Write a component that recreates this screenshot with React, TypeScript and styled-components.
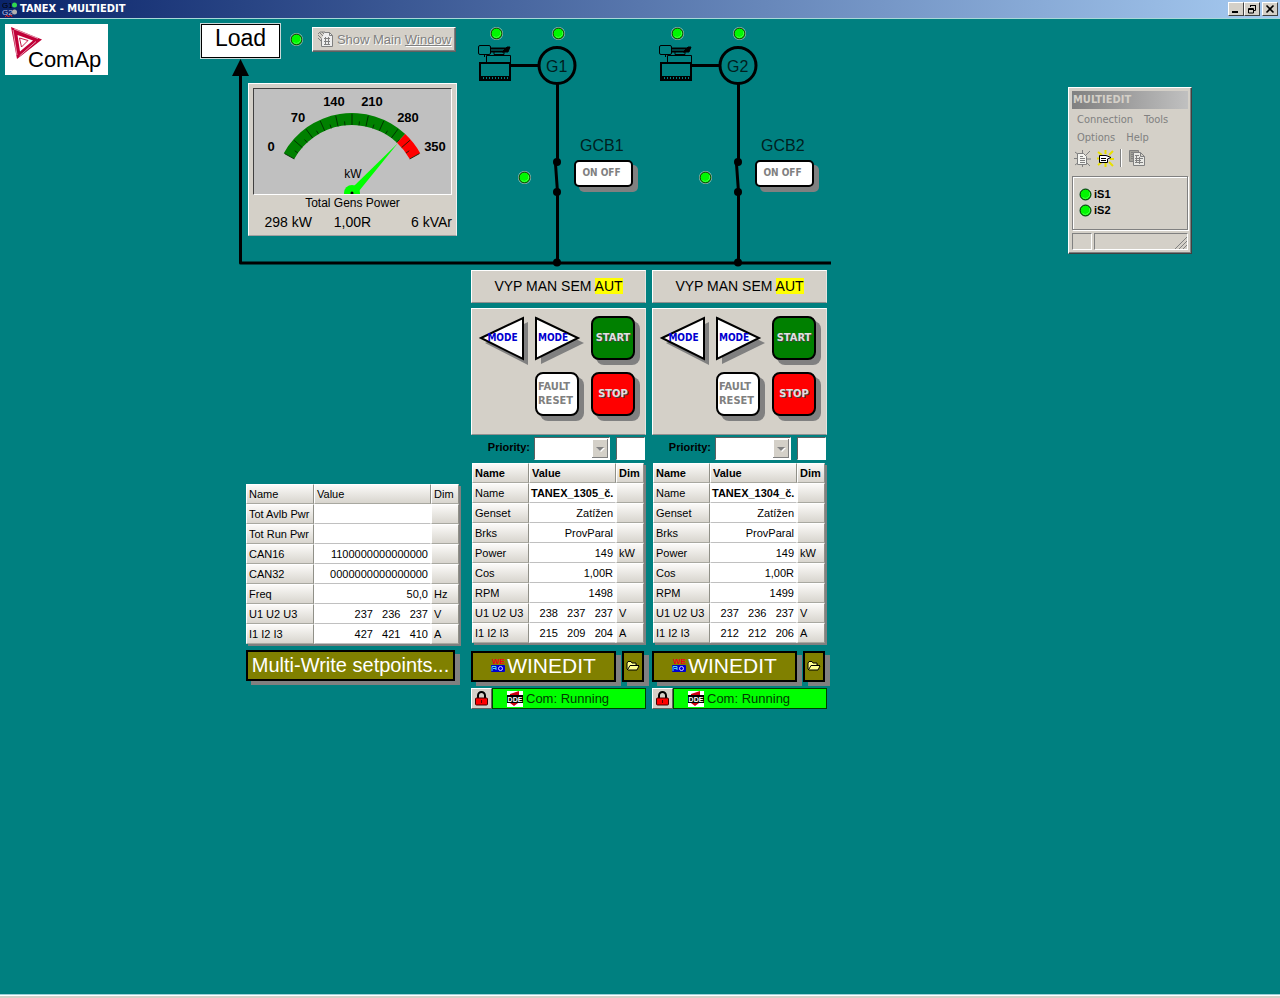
import React from "react";
import styled, { createGlobalStyle } from "styled-components";

const sans = `"Liberation Sans", Arial, sans-serif`;
const ui = `"DejaVu Sans Condensed", "DejaVu Sans", sans-serif`;

const Global = createGlobalStyle`
  * { box-sizing: border-box; }
  body { margin: 0; background: #008080; font-family: ${sans}; font-size: 11px; color: #000; }
  button, input, select { font: inherit; color: inherit; margin: 0; padding: 0; border-radius: 0; }
  svg { display: block; flex: none; }
`;

const Page = styled.div`
  min-height: 100vh;
  display: flex;
  flex-direction: column;
`;

const TitleBar = styled.header`
  height: 19px;
  display: flex;
  align-items: center;
  gap: 2px;
  padding: 0 2px;
  background: linear-gradient(90deg, #0a246a, #a6caf0);
  border-bottom: 1px solid #a8d8d8;
`;

const TitleText = styled.h1`
  margin: 0;
  flex: 1;
  font: bold 11px/16px ${ui};
  color: #fff;
`;

const WindowButtons = styled.div`
  display: flex;
`;

const WindowButton = styled.button<{ $apart?: boolean }>`
  width: 16px;
  height: 14px;
  margin-left: ${(p) => (p.$apart ? 2 : 0)}px;
  display: grid;
  place-items: center;
  background: #d4d0c8;
  border: 1px solid;
  border-color: #fff #404040 #404040 #fff;
`;

const Desktop = styled.main`
  position: relative;
  flex: 1;
  display: flex;
  align-items: flex-start;
  gap: 92px;
  padding-left: 5px;
`;

const Logo = styled.div`
  width: 103px;
  height: 51px;
  margin-top: 5px;
  background: #fff;
`;

const Mimic = styled.section`
  position: relative;
  display: grid;
  grid-template-columns: 265px 175px 175px;
  grid-template-rows: 251px auto;
  column-gap: 6px;
`;

const BusDrawing = styled.svg`
  position: absolute;
  top: 0;
  left: 0;
`;

const Supply = styled.div`
  position: relative;
`;

const LoadRow = styled.div`
  display: flex;
  align-items: center;
  gap: 9px;
  height: 40px;
`;

const LoadBox = styled.div`
  width: 81px;
  height: 36px;
  align-self: flex-end;
  border: 2px solid #000;
  outline: 1px solid #c8d8d8;
  outline-offset: -1px;
  background: #fff;
  font-size: 23px;
  line-height: 27px;
  text-align: center;
`;

const ShowButton = styled.button`
  width: 144px;
  height: 25px;
  display: flex;
  align-items: center;
  justify-content: center;
  gap: 3px;
  background: #d4d0c8;
  border: 1px solid;
  border-color: #fff #606060 #606060 #fff;
  box-shadow: inset -1px -1px #808080;
  font-size: 13px;
  color: #808080;
  text-shadow: 1px 1px #fff;
  white-space: nowrap;
`;

const Meter = styled.figure`
  width: 209px;
  margin: 24px 0 0 48px;
  padding: 4px 4px 3px;
  background: #d4d0c8;
  border: 1px solid;
  border-color: #fff #f0f0f0 #a0a0a0 #fff;
`;

const MeterFace = styled.div`
  width: 199px;
  height: 107px;
  background: #c0c0c0;
  border: 1px solid;
  border-color: #404040 #fff #fff #404040;
`;

const MeterCaption = styled.figcaption`
  font-size: 12px;
  line-height: 16px;
  text-align: center;
`;

const MeterValues = styled.div`
  display: grid;
  grid-template-columns: 70px 1fr 70px;
  padding-top: 1px;
  font-size: 14px;
  line-height: 20px;
  text-align: center;
  white-space: nowrap;

  span:first-child { text-align: right; padding-right: 11px; }
  span:last-child { text-align: right; }
`;

const Feeder = styled.div`
  position: relative;
`;

const BreakerButton = styled.button`
  position: absolute;
  left: 103px;
  top: 141px;
  width: 59px;
  height: 27px;
  border: 2px solid #000;
  border-radius: 5px;
  background: #fff;
  box-shadow: 5px 5px #808080;
  font: bold 10px/20px ${ui};
  color: #808080;
  padding: 0 4px 2px 0;
`;

const GenColumn = styled.div`
  display: flex;
  flex-direction: column;
`;

const raised = `
  background: #d4d0c8;
  border: 1px solid;
  border-color: #fff #e4e4e0 #909090 #fff;
`;

const ModeBar = styled.div`
  ${raised}
  height: 33px;
  font-size: 14px;
  line-height: 30px;
  text-align: center;

  mark { background: #ff0; color: #000; }
`;

const Controls = styled.div`
  ${raised}
  height: 127px;
  margin-top: 5px;
  padding: 7px;
  display: grid;
  grid-template-columns: repeat(3, 44px);
  grid-auto-rows: 44px;
  gap: 12px;
`;

const KeyButton = styled.button<{ $fill: string; $ink: string; $column?: number; $emboss?: boolean }>`
  grid-column: ${(p) => p.$column ?? "auto"};
  border: 2px solid #000;
  border-radius: 8px;
  background: ${(p) => p.$fill};
  box-shadow: 5px 5px #808080;
  font: bold 11px/14px ${ui};
  color: ${(p) => p.$ink};
  text-align: ${(p) => (p.$emboss ? "center" : "left")};
  text-shadow: ${(p) => (p.$emboss ? "1px 1px #404040" : "none")};
  padding: 0 1px 1px;
`;

const ArrowButton = styled.button<{ $align?: string }>`
  position: relative;
  border: 0;
  background: none;
  display: grid;
  align-items: center;
  font: bold 10px/14px ${ui};
  color: #0000d0;

  svg, span { grid-area: 1 / 1; }
  svg { overflow: visible; }
  span { z-index: 1; padding: 0 0 1px 3px; text-align: ${(p) => p.$align ?? "center"}; }
`;

const PriorityRow = styled.div`
  height: 28px;
  display: flex;
  align-items: center;
  justify-content: flex-end;
  gap: 4px;
  padding: 0 1px 1px 0;
  font-weight: bold;

  label { padding-bottom: 4px; }
`;

const sunken = `
  height: 23px;
  background: #fff;
  border: 1px solid;
  border-color: #606060 #fff #fff #606060;
  border-radius: 0;
`;

const SelectFrame = styled.span`
  position: relative;
  width: 76px;
  margin-right: 2px;
  display: flex;

  svg { position: absolute; right: 2px; top: 2px; pointer-events: none; }
`;

const PrioritySelect = styled.select`
  ${sunken}
  width: 100%;
  appearance: none;
`;

const PriorityInput = styled.input`
  ${sunken}
  width: 29px;
`;

const Grid = styled.table<{ $columns: number[] }>`
  width: ${(p) => p.$columns.reduce((a, b) => a + b, 0)}px;
  margin-left: 1px;
  table-layout: fixed;
  border-collapse: separate;
  border-spacing: 0;
  background: #fff;
  box-shadow: 2px 2px #808080;
  line-height: 18px;

  th, td {
    height: 20px;
    padding: 0 0 0 2px;
    overflow: hidden;
    white-space: pre;
    text-align: left;
    font-weight: normal;
    border: 1px solid;
    border-color: #fff #909088 #a8a8a0 #fff;
    background: linear-gradient(#fbfaf8, #d8d5ce);
  }
  td.value {
    padding: 0 2px 0 1px;
    text-align: right;
    background: #fff;
    border-color: #fff #fff #c0c0c0 #fff;
  }
  td.strong { font-weight: bold; text-align: left; }
`;

const GridHead = styled.thead<{ $bold?: boolean }>`
  && th { font-weight: ${(p) => (p.$bold ? "bold" : "normal")}; }
`;

const ButtonRow = styled.div`
  display: flex;
  gap: 6px;
  margin-top: 8px;
`;

const OliveButton = styled.button<{ $width: number; $size?: number }>`
  width: ${(p) => p.$width}px;
  height: 31px;
  display: flex;
  align-items: center;
  justify-content: center;
  gap: 2px;
  padding-bottom: 2px;
  border: 2px solid #000;
  background: #808000;
  box-shadow: 5px 4px #808080;
  font-size: ${(p) => p.$size ?? 20}px;
  line-height: 24px;
  color: #fff;
  white-space: nowrap;
`;

const StatusRow = styled.div`
  display: flex;
  height: 21px;
  margin-top: 6px;
`;

const LockButton = styled.button`
  width: 21px;
  display: grid;
  place-items: center;
  background: #d4d0c8;
  border: 1px solid;
  border-color: #fff #606060 #606060 #fff;
`;

const ComStatus = styled.div`
  flex: 1;
  display: flex;
  align-items: center;
  gap: 3px;
  padding-left: 14px;
  background: #0f0;
  border: 1px solid #004000;
  font-size: 13px;
  color: #003c00;
`;

const Totals = styled.div`
  display: flex;
  flex-direction: column;
  justify-content: flex-end;
  align-items: flex-start;
  gap: 6px;
  padding: 0 0 28px 45px;

  > button { margin-left: 1px; }
`;

const ToolWindow = styled.aside`
  position: absolute;
  left: 1068px;
  top: 68px;
  width: 124px;
  padding: 3px;
  background: #d4d0c8;
  border: 1px solid;
  border-color: #fff #404040 #404040 #fff;
  box-shadow: inset -1px -1px #808080;
`;

const ToolTitle = styled.h2`
  margin: 0;
  height: 18px;
  padding-left: 1px;
  background: linear-gradient(90deg, #808080, #c0c0c0);
  font: bold 11px/18px ${ui};
  color: #d4d0c8;
`;

const ToolMenu = styled.nav`
  display: flex;
  flex-wrap: wrap;
  column-gap: 11px;
  padding: 2px 5px 0;

  a {
    font: 11px/18px ${ui};
    color: #808080;
    text-decoration: none;
  }
`;

const ToolBar = styled.div`
  display: flex;
  align-items: center;
  gap: 6px;
  height: 22px;
  padding-left: 2px;
`;

const IconButton = styled.button`
  border: 0;
  background: none;
`;

const Separator = styled.span`
  width: 2px;
  height: 18px;
  border-left: 1px solid #808080;
  border-right: 1px solid #fff;
`;

const SiteList = styled.ul`
  list-style: none;
  margin: 7px 0 3px;
  height: 54px;
  padding: 9px 6px;
  border: 1px solid #808080;
  box-shadow: inset 1px 1px #fff, 1px 1px #fff;

  li {
    display: flex;
    align-items: center;
    gap: 2px;
    height: 16px;
    font-weight: bold;
  }
`;

const ToolStatus = styled.div`
  display: grid;
  grid-template-columns: 20px 1fr;
  gap: 2px;
  height: 17px;

  span {
    display: flex;
    justify-content: flex-end;
    align-items: flex-end;
    border: 1px solid;
    border-color: #808080 #fff #fff #808080;
  }
`;

const Footer = styled.footer`
  height: 4px;
  background: #d4d0c8;
  border-top: 1px solid #a0d0d8;
  box-shadow: inset 0 1px #fff;
`;

const LedShape = ({ x, y }: { x: number; y: number }) => (
  <g>
    <circle cx={x} cy={y} r="6.500" fill="#d0ecd8" />
    <circle cx={x} cy={y} r="5.500" fill="#00f800" stroke="#001000" />
    <path d={`M${x - 3} ${y + 3}A4.5 4.5 0 0 0 ${x + 4} ${y - 2}`} fill="none" stroke="#60ff60" strokeWidth="0.700" />
  </g>
);

const Led = () => (
  <svg width="13" height="13" role="img" aria-label="On">
    <LedShape x={6.5} y={6.5} />
  </svg>
);

const AppIcon = () => (
  <svg width="16" height="16" viewBox="0 0 16 16">
    <text x="0" y="7" fontSize="8" fontFamily="Liberation Sans" fill="#000">G1</text>
    <text x="0" y="14" fontSize="8" fontFamily="Liberation Sans" fill="#b8c0e8">G2</text>
    <circle cx="12.500" cy="4" r="2.500" fill="#30d850" />
    <circle cx="12.500" cy="11" r="2.500" fill="#b0b0b0" />
    <path d="M3 16l2-2 1 2 3-2 1 2" fill="none" stroke="#e02020" />
  </svg>
);

const LogoDrawing = () => (
  <svg width="103" height="51" viewBox="0 0 103 51" role="img" aria-label="ComAp">
    <path d="M6 3L37 15.500L12 35Z" fill="#c00038" />
    <path d="M12.500 11L28 16.500L15 27.500Z" fill="#fff" />
    <path d="M8 6L12 31M9 5L33 14.500M14.500 32L31 17.500" stroke="#fff" strokeWidth="0.600" />
    <path d="M14.500 14L23 16.500L16.500 23Z" fill="none" stroke="#c00038" strokeWidth="0.900" />
    <text x="23" y="43" fontSize="22" fontFamily="Liberation Sans">ComAp</text>
  </svg>
);

const polar = (r: number, deg: number) => {
  const a = (deg * Math.PI) / 180;
  return `${(98 + r * Math.cos(a)).toFixed(2)} ${(102 - r * Math.sin(a)).toFixed(2)}`;
};

const band = (from: number, to: number) =>
  `M${polar(78, from)}A78 78 0 0 1 ${polar(78, to)}L${polar(66, to)}A66 66 0 0 0 ${polar(66, from)}Z`;

const scale: [string, number, number][] = [
  ["0", 17, 62],
  ["70", 44, 33],
  ["140", 80, 17],
  ["210", 118, 17],
  ["280", 154, 33],
  ["350", 181, 62],
];

const Gauge = () => (
  <svg width="197" height="105" viewBox="0 0 197 105" role="img" aria-label="298 kW">
    <path d={band(151, 47)} fill="#008000" />
    <path d={band(47, 29)} fill="#f00" />
    {Array.from({ length: 21 }, (_, i) => (
      <path
        key={i}
        d={`M${polar(66, 151 - i * 6.1)}L${polar(i % 2 ? 70 : 77, 151 - i * 6.1)}`}
        stroke="#002000"
        strokeWidth="0.800"
      />
    ))}
    <g fontSize="13" fontWeight="bold" fontFamily="Liberation Sans" textAnchor="middle">
      {scale.map(([text, x, y]) => (
        <text key={text} x={x} y={y}>{text}</text>
      ))}
    </g>
    <text x="99" y="89" fontSize="12" fontFamily="Liberation Sans" textAnchor="middle">kW</text>
    <circle cx="98" cy="104" r="8" fill="#0f0" />
    <path d="M100 97L144 54L105 102Z" fill="#0f0" />
    <circle cx="98" cy="104" r="1.500" />
  </svg>
);

const FeederDrawing = ({ n }: { n: number }) => (
  <svg width="175" height="251" viewBox="0 0 175 251" role="img" aria-label={`Generator ${n}`}>
    <LedShape x={25.5} y={14.5} />
    <LedShape x={87.5} y={14.5} />
    <LedShape x={53.5} y={158.5} />
    <g fill="none" stroke="#000">
      <rect x="7.500" y="26.500" width="12" height="9" rx="1.500" />
      <path d="M15.500 43V36.500H39.500V43M13.500 36V38" />
      <path d="M20 29.500H36M20 32.500H33" strokeWidth="2" />
      <path d="M23 33V35.500H33V33" />
      <path d="M31 33L36 28H39L37 33Z" fill="#000" />
      <rect x="9" y="44" width="30" height="17" strokeWidth="2" />
      <path d="M9 57.500H39" />
      <path d="M10 59.500H39" strokeWidth="3" strokeDasharray="2 1" />
    </g>
    <g fill="none" stroke="#000" strokeWidth="3">
      <path d="M39 46.500H68M86.500 65V143M84.500 145L86.500 173V244" />
      <circle cx="86" cy="46.500" r="18" />
    </g>
    <circle cx="86" cy="143" r="4" />
    <circle cx="86" cy="173" r="4" />
    <circle cx="86" cy="243.500" r="4" />
    <g fontSize="16" fontFamily="Liberation Sans" fill="#002020">
      <text x="75" y="53">G{n}</text>
      <text x="109" y="132">GCB{n}</text>
    </g>
  </svg>
);

const ArrowLeft = () => (
  <svg width="44" height="44" viewBox="0 0 44 44">
    <path d="M6 27L49 6V49Z" fill="#808080" />
    <path d="M2 22L44 2V43Z" fill="#fff" stroke="#000" strokeWidth="2" />
  </svg>
);

const ArrowRight = () => (
  <svg width="44" height="44" viewBox="0 0 44 44">
    <path d="M6 6L49 27L6 48Z" fill="#808080" />
    <path d="M1 2L43 22L1 43Z" fill="#fff" stroke="#000" strokeWidth="2" />
  </svg>
);

const DropArrow = () => (
  <svg width="16" height="19" viewBox="0 0 16 19">
    <rect width="16" height="19" fill="#808080" />
    <rect width="15" height="18" fill="#fff" />
    <rect x="1" y="1" width="14" height="17" fill="#d4d0c8" />
    <path d="M5 9H13L9 13Z" fill="#fff" />
    <path d="M4 8H12L8 12Z" fill="#808080" />
  </svg>
);

const PageIcon = () => (
  <svg width="17" height="17" viewBox="0 0 17 17" fill="none" stroke="#808080">
    <path d="M1 3L3 1H8L9 4M1 4L6 9M1 7L5 11M3 2L7 6M5 1L8 4" />
    <path d="M7.500 1.500H12.500L15.500 4.500V15.500H4.500V8" fill="#eee" />
    <path d="M12.500 1.500V4.500H15.500M7 7.500H13M7 10.500H13M7 13.500H13M8.500 6V14M11.500 6V14" />
  </svg>
);

const WinEditIcon = () => (
  <svg width="14" height="15" viewBox="0 0 14 15">
    <text x="1" y="6" fontSize="8" fontWeight="bold" fontFamily="Liberation Sans" fill="#f00018">WE</text>
    <rect y="7" width="14" height="7" rx="1" fill="#0000d0" />
    <path d="M1 13V8.500H5V12M2 10.500H5" fill="none" stroke="#50e0e0" />
    <circle cx="9.500" cy="10.500" r="2" fill="none" stroke="#d0d0ff" />
  </svg>
);

const FolderIcon = () => (
  <svg width="14" height="12" viewBox="0 0 14 12">
    <path d="M1 9V3L2 1.500H5L6 3H10V5L13 6L11 10H2Z" fill="#ffff90" stroke="#000" />
    <path d="M2 9L4 5.500H13" fill="none" stroke="#000" />
  </svg>
);

const LockIcon = () => (
  <svg width="15" height="15" viewBox="0 0 15 15">
    <path d="M4 7V4.500A3.500 3.500 0 0 1 11 4.500V7" fill="none" stroke="#000" strokeWidth="2" />
    <rect x="1.500" y="7" width="12" height="7" rx="1" fill="#f00" stroke="#400000" />
    <path d="M7.500 9V12" stroke="#600000" />
  </svg>
);

const DdeIcon = () => (
  <svg width="16" height="16" viewBox="0 0 16 16">
    <rect width="16" height="16" fill="#fff" />
    <path d="M3 3L12 0V4H16V12H11L7 15L3 12Z" fill="#d00010" />
    <rect y="4" width="16" height="8" fill="#000" />
    <text x="8" y="11" fontSize="7" fontWeight="bold" fontFamily="Liberation Sans" textAnchor="middle" fill="#fff">DDE</text>
  </svg>
);

const BurstIcon = ({ active }: { active?: boolean }) => (
  <svg width="17" height="17" viewBox="0 0 17 17" fill="none" stroke={active ? "#e8e000" : "#808080"}>
    <path d="M1 2L5 5M8.500 0V4M16 1L12 5M0 8.500H4M13 9H17M1 15L5 12M8.500 13V17M16 16L12 12" strokeWidth={active ? 2 : 1} />
    {active ? (
      <path d="M2.500 5.500H9L14 7.500L10.500 9V12.500H2.500ZM4 8.500H9M4 10.500H9" fill="#fff" stroke="#000" />
    ) : (
      <path d="M3.500 3.500H9.500L12.500 6.500V14.500H3.500ZM6 6.500H9M6 8.500H11M6 10.500H11M6 12.500H11" fill="#f4f4f0" />
    )}
  </svg>
);

const CopyIcon = () => (
  <svg width="18" height="17" viewBox="0 0 18 17" fill="none" stroke="#808080">
    <path d="M1.500 .500H10.500V11.500H1.500ZM3 2.500H9M3 4.500H9M3 6.500H9M3 8.500H9" fill="#a0a098" />
    <path d="M5.500 2.500H12.500L16.500 6.500V15.500H5.500ZM12.500 2.500V6.500H16.500" fill="#e8e8e4" />
    <path d="M7 5.500H11M7 8.500H15M7 10.500H13M7 12.500H15M8.500 5V13M11.500 7V14" />
  </svg>
);

type Row = { name: string; value: string; dim?: string; strong?: boolean };

const DataTable = ({ columns, rows, bold }: { columns: number[]; rows: Row[]; bold?: boolean }) => (
  <Grid $columns={columns}>
    <colgroup>
      {columns.map((w, i) => (
        <col key={i} width={w} />
      ))}
    </colgroup>
    <GridHead $bold={bold}>
      <tr>
        <th scope="col">Name</th>
        <th scope="col">Value</th>
        <th scope="col">Dim</th>
      </tr>
    </GridHead>
    <tbody>
      {rows.map((r) => (
        <tr key={r.name}>
          <th scope="row">{r.name}</th>
          <td className={r.strong ? "value strong" : "value"}>{r.value}</td>
          <td>{r.dim}</td>
        </tr>
      ))}
    </tbody>
  </Grid>
);

const totals: Row[] = [
  { name: "Tot Avlb Pwr", value: "" },
  { name: "Tot Run Pwr", value: "" },
  { name: "CAN16", value: "1100000000000000" },
  { name: "CAN32", value: "0000000000000000" },
  { name: "Freq", value: "50,0", dim: "Hz" },
  { name: "U1 U2 U3", value: "237   236   237", dim: "V" },
  { name: "I1 I2 I3", value: "427   421   410", dim: "A" },
];

const gensets: { n: number; rows: Row[] }[] = [
  {
    n: 1,
    rows: [
      { name: "Name", value: "TANEX_1305_č.", strong: true },
      { name: "Genset", value: "Zatížen" },
      { name: "Brks", value: "ProvParal" },
      { name: "Power", value: "149", dim: "kW" },
      { name: "Cos", value: "1,00R" },
      { name: "RPM", value: "1498" },
      { name: "U1 U2 U3", value: "238   237   237", dim: "V" },
      { name: "I1 I2 I3", value: "215   209   204", dim: "A" },
    ],
  },
  {
    n: 2,
    rows: [
      { name: "Name", value: "TANEX_1304_č.", strong: true },
      { name: "Genset", value: "Zatížen" },
      { name: "Brks", value: "ProvParal" },
      { name: "Power", value: "149", dim: "kW" },
      { name: "Cos", value: "1,00R" },
      { name: "RPM", value: "1499" },
      { name: "U1 U2 U3", value: "237   236   237", dim: "V" },
      { name: "I1 I2 I3", value: "212   212   206", dim: "A" },
    ],
  },
];

const GensetPanel = ({ n, rows }: { n: number; rows: Row[] }) => (
  <GenColumn>
    <ModeBar>
      VYP MAN SEM <mark>AUT</mark>
    </ModeBar>
    <Controls>
      <ArrowButton type="button">
        <ArrowLeft />
        <span>MODE</span>
      </ArrowButton>
      <ArrowButton type="button" $align="left">
        <ArrowRight />
        <span>MODE</span>
      </ArrowButton>
      <KeyButton type="button" $fill="#008000" $ink="#e0e0e0" $emboss>START</KeyButton>
      <KeyButton type="button" $fill="#fff" $ink="#808080" $column={2}>FAULT RESET</KeyButton>
      <KeyButton type="button" $fill="#f00" $ink="#e0e0e0" $emboss>STOP</KeyButton>
    </Controls>
    <PriorityRow>
      <label htmlFor={`priority-${n}`}>Priority:</label>
      <SelectFrame>
        <PrioritySelect id={`priority-${n}`} />
        <DropArrow />
      </SelectFrame>
      <PriorityInput aria-label="Priority value" />
    </PriorityRow>
    <DataTable columns={[57, 87, 28]} rows={rows} bold />
    <ButtonRow>
      <OliveButton type="button" $width={145} $size={21}>
        <WinEditIcon />
        WINEDIT
      </OliveButton>
      <OliveButton type="button" $width={22} aria-label="Open">
        <FolderIcon />
      </OliveButton>
    </ButtonRow>
    <StatusRow>
      <LockButton type="button" aria-label="Lock">
        <LockIcon />
      </LockButton>
      <ComStatus>
        <DdeIcon />
        Com: Running
      </ComStatus>
    </StatusRow>
  </GenColumn>
);

export default function App() {
  return (
    <Page>
      <Global />
      <TitleBar>
        <AppIcon />
        <TitleText>TANEX - MULTIEDIT</TitleText>
        <WindowButtons>
          <WindowButton type="button" aria-label="Minimize">
            <svg width="12" height="10"><path d="M2 8H8" stroke="#000" strokeWidth="2" /></svg>
          </WindowButton>
          <WindowButton type="button" aria-label="Restore">
            <svg width="12" height="10" fill="none" stroke="#000">
              <path d="M4.500 3V1.500H9.500V6.500H8M4 1.500H10M2.500 4.500H7.500V9H2.500ZM2 5.500H8" />
            </svg>
          </WindowButton>
          <WindowButton type="button" aria-label="Close" $apart>
            <svg width="12" height="10"><path d="M2.500 1.500L9.500 8.500M9.500 1.500L2.500 8.500" stroke="#000" strokeWidth="1.600" /></svg>
          </WindowButton>
        </WindowButtons>
      </TitleBar>
      <Desktop>
        <Logo>
          <LogoDrawing />
        </Logo>
        <Mimic>
          <BusDrawing width="631" height="251" viewBox="0 0 631 251" aria-hidden="true">
            <path d="M40.500 50V244H631" fill="none" stroke="#000" strokeWidth="3" strokeLinejoin="round" />
            <path d="M40.500 40L49 57H32Z" />
          </BusDrawing>
          <Supply>
            <LoadRow>
              <LoadBox>Load</LoadBox>
              <Led />
              <ShowButton type="button">
                <PageIcon />
                <span>Show Main <u>Window</u></span>
              </ShowButton>
            </LoadRow>
            <Meter>
              <MeterFace>
                <Gauge />
              </MeterFace>
              <MeterCaption>Total Gens Power</MeterCaption>
              <MeterValues>
                <span>298 kW</span>
                <span>1,00R</span>
                <span>6 kVAr</span>
              </MeterValues>
            </Meter>
          </Supply>
          {gensets.map((g) => (
            <Feeder key={g.n}>
              <FeederDrawing n={g.n} />
              <BreakerButton type="button">ON OFF</BreakerButton>
            </Feeder>
          ))}
          <Totals>
            <DataTable columns={[68, 117, 28]} rows={totals} />
            <OliveButton type="button" $width={209}>Multi-Write setpoints...</OliveButton>
          </Totals>
          {gensets.map((g) => (
            <GensetPanel key={g.n} n={g.n} rows={g.rows} />
          ))}
        </Mimic>
        <ToolWindow>
          <ToolTitle>MULTIEDIT</ToolTitle>
          <ToolMenu>
            <a href="#connection">Connection</a>
            <a href="#tools">Tools</a>
            <a href="#options">Options</a>
            <a href="#help">Help</a>
          </ToolMenu>
          <ToolBar>
            <IconButton type="button" aria-label="New connection"><BurstIcon /></IconButton>
            <IconButton type="button" aria-label="Connect"><BurstIcon active /></IconButton>
            <Separator />
            <IconButton type="button" aria-label="Copy"><CopyIcon /></IconButton>
          </ToolBar>
          <SiteList>
            <li><Led />iS1</li>
            <li><Led />iS2</li>
          </SiteList>
          <ToolStatus>
            <span />
            <span>
              <svg width="12" height="12" stroke="#808080"><path d="M0 12L12 0M4 12L12 4M8 12L12 8" /></svg>
            </span>
          </ToolStatus>
        </ToolWindow>
      </Desktop>
      <Footer />
    </Page>
  );
}
